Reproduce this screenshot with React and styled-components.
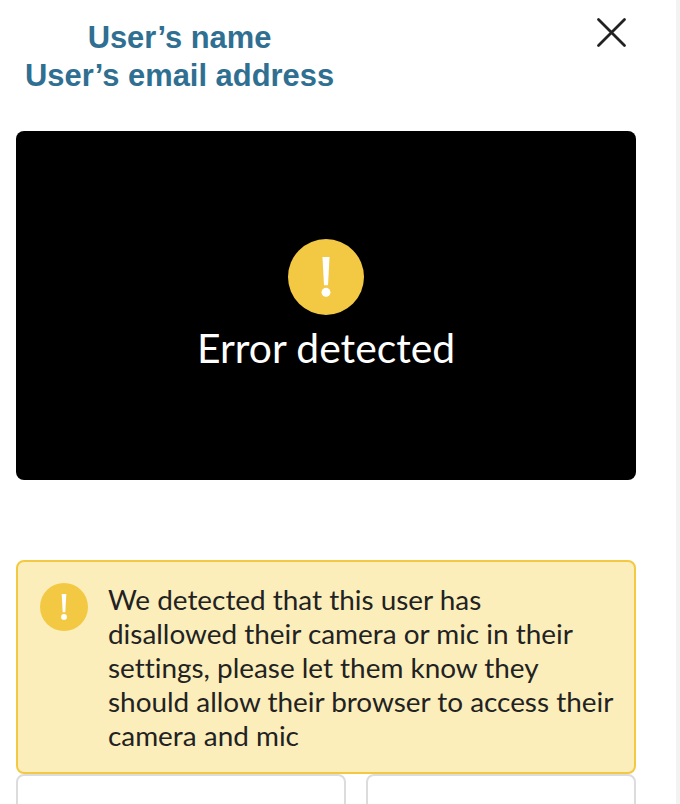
import React from "react";
import styled, { createGlobalStyle } from "styled-components";

const Global = createGlobalStyle`
  html, body { margin: 0; padding: 0; background: #fff; height: 100%; overflow: hidden; }
  #root { height: 100%; }
`;

const Page = styled.div`
  display: flex;
  width: 680px;
  height: 804px;
  overflow: hidden;
  font-family: Lato, "Liberation Sans", sans-serif;
  font-variant-ligatures: none;
`;

const Main = styled.main`
  width: 620px;
  padding: 0 40px 0 16px;
  display: flex;
  flex-direction: column;
  flex: none;
`;

const ScrollTrack = styled.div`
  margin-left: auto;
  width: 4px;
  background: #f3f3f3;
  flex: none;
`;

const Header = styled.header`
  display: flex;
  justify-content: space-between;
  align-items: flex-start;
  height: 131px;
  flex: none;
`;

const Identity = styled.div`
  margin: 19px 0 0 9px;
  width: 309px;
  text-align: center;
  color: #2f6f91;
  font-family: "Liberation Sans", Arial, sans-serif;
  font-weight: 700;
  font-size: 30.9px;
  line-height: 38px;
  white-space: nowrap;
`;

const CloseButton = styled.button`
  border: 0;
  background: none;
  padding: 0;
  margin: 17px 9px 0 0;
  width: 31px;
  height: 31px;
  color: #222;
  display: flex;
`;

const Video = styled.section`
  height: 349px;
  background: #000;
  border-radius: 8px;
  display: flex;
  flex-direction: column;
  align-items: center;
  padding-top: 108px;
  box-sizing: border-box;
  flex: none;
`;

const Badge = styled.div`
  width: ${(p) => p.$size}px;
  height: ${(p) => p.$size}px;
  border-radius: 50%;
  background: #f3c944;
  flex: none;
  display: flex;
  align-items: center;
  justify-content: center;
  color: #fff;
`;

const VideoText = styled.div`
  color: #fff;
  font-size: 40.8px;
  line-height: 48px;
  margin-top: 9px;
`;

const Alert = styled.section`
  margin-top: 80px;
  height: 214px;
  box-sizing: border-box;
  background: #fbeebb;
  border: 2px solid #f3c944;
  border-radius: 8px;
  padding: 21px 12px 0 21.5px;
  display: flex;
  gap: 20.5px;
  flex: none;
`;

const AlertText = styled.p`
  margin: -1px 0 0;
  max-width: 506px;
  color: #222;
  font-size: 27.9px;
  line-height: 34px;
`;

const Cards = styled.div`
  display: grid;
  grid-template-columns: 330px 270px;
  gap: 20px;
  flex: none;
`;

const Card = styled.div`
  height: 60px;
  box-sizing: border-box;
  background: #fff;
  border: 2px solid #dcdcdc;
  border-radius: 8px;
`;

const Bang = ({ w, h }) => (
  <svg width={w} height={h} viewBox="0 0 10 34" fill="currentColor" aria-hidden="true">
    <path d="M2 0h6L6.7 24H3.3z" />
    <circle cx="5" cy="30" r="3.8" />
  </svg>
);

export default function App() {
  return (
    <Page>
      <Global />
      <Main>
        <Header>
          <Identity>
            User’s name
            <br />
            User’s email address
          </Identity>
          <CloseButton aria-label="Close">
            <svg width="31" height="31" viewBox="0 0 31 31" fill="none" stroke="currentColor" strokeWidth="2.8" strokeLinecap="round">
              <path d="M2.5 2.5l26 26M28.5 2.5l-26 26" />
            </svg>
          </CloseButton>
        </Header>
        <Video>
          <Badge $size={76}>
            <Bang w={12} h={40} />
          </Badge>
          <VideoText>Error detected</VideoText>
        </Video>
        <Alert>
          <Badge $size={48}>
            <Bang w={8} h={26} />
          </Badge>
          <AlertText>
            We detected that this user has disallowed their camera or mic in their settings, please let them know they should allow their browser to access their camera and mic
          </AlertText>
        </Alert>
        <Cards>
          <Card />
          <Card />
        </Cards>
      </Main>
      <ScrollTrack />
    </Page>
  );
}
